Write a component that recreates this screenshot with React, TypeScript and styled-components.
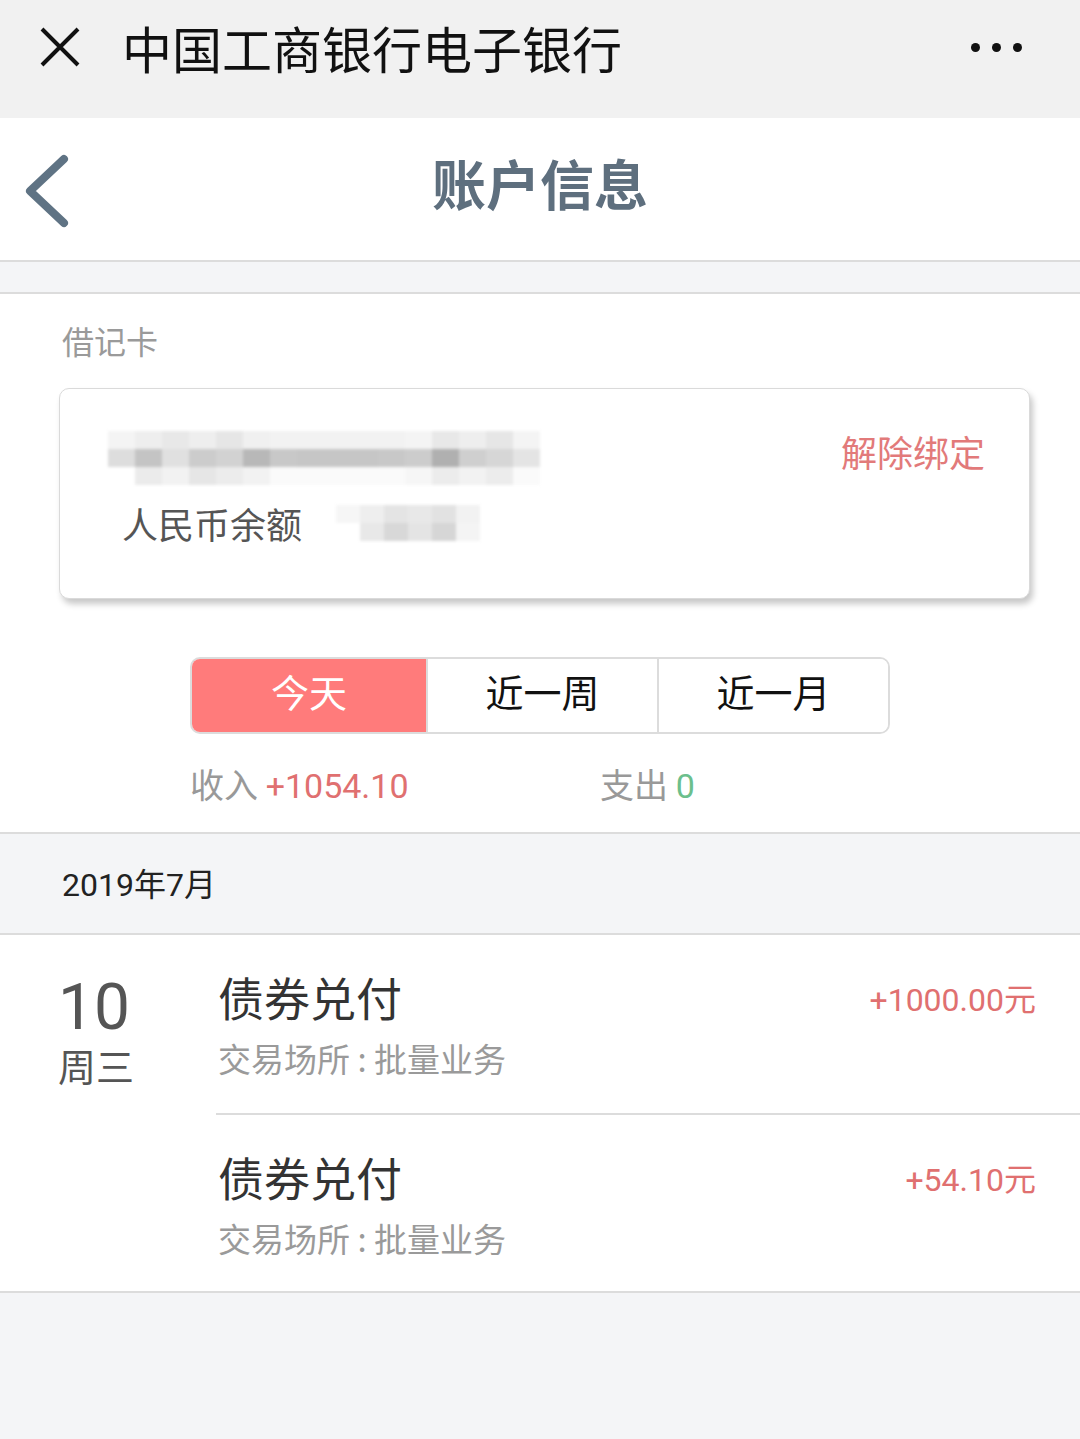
import React from "react";
import styled, { createGlobalStyle } from "styled-components";

const GlobalStyle = createGlobalStyle`
  html, body {
    margin: 0;
    padding: 0;
    background: #f4f5f7;
    font-family: Roboto, "Noto Sans CJK SC", sans-serif;
  }
`;

const accountCells = [
  ["#f4f4f4", "#eeeeee", "#e8e8e8", "#eeeeee", "#e6e6e6", "#f0f0f0", "#f2f2f2", "#f2f2f2", "#f2f2f2", "#f2f2f2", "#f2f2f2", "#f4f4f4", "#e8e8e8", "#eeeeee", "#e6e6e6", "#f4f4f4"],
  ["#dddddd", "#c4c4c4", "#e0e0e0", "#cccccc", "#d2d2d2", "#b8b8b8", "#c8c8c8", "#c6c6c6", "#c6c6c6", "#c6c6c6", "#c8c8c8", "#cccccc", "#b0b0b0", "#cfcfcf", "#d6d6d6", "#e4e4e4"],
  ["#ffffff", "#ebebeb", "#f2f2f2", "#e6e6e6", "#ececec", "#f2f2f2", "#fafafa", "#fafafa", "#fafafa", "#fafafa", "#fafafa", "#f6f6f6", "#ececec", "#f2f2f2", "#ececec", "#fafafa"],
];

const balanceCells = [
  ["#f6f6f6", "#eeeeee", "#e4e4e4", "#e8e8e8", "#e2e2e2", "#f2f2f2"],
  ["#ffffff", "#e8e8e8", "#d8d8d8", "#e4e4e4", "#d6d6d6", "#f4f4f4"],
];

const records = [
  { title: "债券兑付", place: "交易场所 : 批量业务", amount: "+1000.00元" },
  { title: "债券兑付", place: "交易场所 : 批量业务", amount: "+54.10元" },
];

export default function App() {
  return (
    <Page>
      <GlobalStyle />
      <TopBar>
        <CloseIcon viewBox="0 0 44 44">
          <path d="M4 4 L40 40 M40 4 L4 40" stroke="#111" strokeWidth="4" fill="none" />
        </CloseIcon>
        <TopTitle>中国工商银行电子银行</TopTitle>
        <Dots>
          <i />
          <i />
          <i />
        </Dots>
      </TopBar>

      <Header>
        <BackIcon viewBox="0 0 50 74">
          <path d="M42 5 L8 37 L42 69" stroke="#5f7384" strokeWidth="8" strokeLinecap="round" strokeLinejoin="round" fill="none" />
        </BackIcon>
        <HeaderTitle>账户信息</HeaderTitle>
      </Header>

      <Gap />

      <AccountSection>
        <CardLabel>借记卡</CardLabel>
        <Card>
          <CardTop>
            <Mosaic cols={16} cell={27} row={18}>
              {accountCells.flat().map((c, i) => (
                <Cell key={i} $bg={c} />
              ))}
            </Mosaic>
            <Unbind>解除绑定</Unbind>
          </CardTop>
          <BalanceRow>
            <BalanceLabel>人民币余额</BalanceLabel>
            <Mosaic cols={6} cell={24} row={18}>
              {balanceCells.flat().map((c, i) => (
                <Cell key={i} $bg={c} />
              ))}
            </Mosaic>
          </BalanceRow>
        </Card>

        <Segments>
          <Segment $active>今天</Segment>
          <Segment>近一周</Segment>
          <Segment>近一月</Segment>
        </Segments>

        <Summary>
          <SummaryItem>
            收入 <Income>+1054.10</Income>
          </SummaryItem>
          <SummaryItem>
            支出 <Spend>0</Spend>
          </SummaryItem>
        </Summary>
      </AccountSection>

      <MonthBar>2019年7月</MonthBar>

      <ListSection>
        <DateCol>
          <Day>10</Day>
          <Weekday>周三</Weekday>
        </DateCol>
        <Records>
          {records.map((r, i) => (
            <Record key={i} $divider={i > 0}>
              <RecordMain>
                <RecordTitle>{r.title}</RecordTitle>
                <RecordPlace>{r.place}</RecordPlace>
              </RecordMain>
              <Amount>{r.amount}</Amount>
            </Record>
          ))}
        </Records>
      </ListSection>
    </Page>
  );
}

const Page = styled.div`
  width: 1080px;
  min-height: 1439px;
  background: #f4f5f7;
`;

const TopBar = styled.div`
  height: 118px;
  background: #f1f1f1;
  display: flex;
  align-items: center;
  padding: 0 58px 24px 38px;
  box-sizing: border-box;
`;

const CloseIcon = styled.svg`
  width: 44px;
  height: 44px;
  flex: none;
`;

const TopTitle = styled.div`
  margin-left: 40px;
  font-family: "Noto Sans CJK SC", sans-serif;
  font-size: 50px;
  line-height: 60px;
  color: #111;
  flex: 1;
`;

const Dots = styled.div`
  display: flex;
  gap: 12px;
  i {
    width: 9px;
    height: 9px;
    border-radius: 50%;
    background: #111;
  }
`;

const Header = styled.div`
  height: 142px;
  background: #fff;
  position: relative;
  display: flex;
  align-items: center;
  justify-content: center;
  border-bottom: 2px solid #dcdcdc;
`;

const BackIcon = styled.svg`
  position: absolute;
  left: 22px;
  top: 36px;
  width: 50px;
  height: 74px;
`;

const HeaderTitle = styled.div`
  font-family: "Noto Sans CJK SC", sans-serif;
  font-weight: 700;
  font-size: 54px;
  line-height: 64px;
  color: #5e6f7e;
  margin-top: -12px;
`;

const Gap = styled.div`
  height: 30px;
  background: #f4f5f7;
  border-bottom: 2px solid #dcdcdc;
`;

const AccountSection = styled.div`
  background: #fff;
  padding: 23px 0 24px;
  border-bottom: 2px solid #dcdcdc;
`;

const CardLabel = styled.div`
  margin-left: 62px;
  font-family: "Noto Sans CJK SC", sans-serif;
  font-size: 32px;
  line-height: 46px;
  color: #9a9a9a;
`;

const Card = styled.div`
  margin: 25px 0 0 59px;
  width: 971px;
  height: 211px;
  box-sizing: border-box;
  border: 1px solid #dadada;
  border-radius: 10px;
  background: #fff;
  box-shadow: 3px 5px 6px rgba(0, 0, 0, 0.22);
  padding: 42px 44px 0 48px;
`;

const CardTop = styled.div`
  display: flex;
  justify-content: space-between;
  align-items: flex-start;
`;

const Mosaic = styled.div<{ cols: number; cell: number; row: number }>`
  display: grid;
  grid-template-columns: repeat(${(p) => p.cols}, ${(p) => p.cell}px);
  grid-auto-rows: ${(p) => p.row}px;
  filter: blur(1.5px);
`;

const Cell = styled.div<{ $bg: string }>`
  background: ${(p) => p.$bg};
`;

const Unbind = styled.div`
  font-family: "Noto Sans CJK SC", sans-serif;
  font-size: 36px;
  line-height: 44px;
  color: #e27a7a;
  margin-top: -2px;
`;

const BalanceRow = styled.div`
  display: flex;
  align-items: center;
  gap: 34px;
  margin: 16px 0 0 14px;
`;

const BalanceLabel = styled.div`
  font-family: "Noto Sans CJK SC", sans-serif;
  font-size: 36px;
  line-height: 44px;
  color: #555;
`;

const Segments = styled.div`
  margin: 58px 0 0 190px;
  width: 700px;
  height: 77px;
  box-sizing: border-box;
  border: 2px solid #dcdcdc;
  border-radius: 10px;
  overflow: hidden;
  display: grid;
  grid-template-columns: 234px 1fr 1fr;
`;

const Segment = styled.div<{ $active?: boolean }>`
  display: flex;
  align-items: center;
  justify-content: center;
  padding-bottom: 10px;
  font-family: "Noto Sans CJK SC", sans-serif;
  font-size: 38px;
  color: ${(p) => (p.$active ? "#fff" : "#111")};
  background: ${(p) => (p.$active ? "#ff7b7b" : "#fff")};
  & + & {
    border-left: 2px solid #dcdcdc;
  }
`;

const Summary = styled.div`
  display: grid;
  grid-template-columns: 410px 1fr;
  margin: 24px 0 0 190px;
  height: 50px;
  align-items: center;
`;

const SummaryItem = styled.div`
  font-family: "Noto Sans CJK SC", sans-serif;
  font-size: 34px;
  color: #999;
  white-space: pre;
`;

const Income = styled.span`
  font-family: Roboto, sans-serif;
  color: #e07070;
`;

const Spend = styled.span`
  font-family: Roboto, sans-serif;
  color: #6cbf8c;
`;

const MonthBar = styled.div`
  height: 101px;
  box-sizing: border-box;
  padding: 0 0 4px 62px;
  display: flex;
  align-items: center;
  font-size: 32px;
  color: #222;
  background: #f4f5f7;
  border-bottom: 2px solid #dcdcdc;
`;

const ListSection = styled.div`
  background: #fff;
  display: flex;
  border-bottom: 2px solid #dcdcdc;
`;

const DateCol = styled.div`
  width: 216px;
  padding: 43px 0 0 58px;
  box-sizing: border-box;
  flex: none;
`;

const Day = styled.div`
  font-size: 64px;
  line-height: 60px;
  color: #555;
`;

const Weekday = styled.div`
  margin-top: 8px;
  font-family: Roboto, "Noto Sans CJK SC", sans-serif;
  font-size: 38px;
  line-height: 44px;
  color: #555;
`;

const Records = styled.div`
  flex: 1;
`;

const Record = styled.div<{ $divider?: boolean }>`
  display: flex;
  justify-content: space-between;
  align-items: flex-start;
  padding: 33px 44px 0 2px;
  height: 178px;
  box-sizing: border-box;
  border-top: ${(p) => (p.$divider ? "2px solid #dcdcdc" : "none")};
`;

const RecordMain = styled.div`
  display: flex;
  flex-direction: column;
  gap: 11px;
`;

const RecordTitle = styled.div`
  font-family: "Noto Sans CJK SC", sans-serif;
  font-size: 46px;
  line-height: 56px;
  color: #333;
`;

const RecordPlace = styled.div`
  font-family: "Noto Sans CJK SC", sans-serif;
  font-size: 33px;
  line-height: 46px;
  color: #9a9a9a;
  white-space: pre;
`;

const Amount = styled.div`
  font-size: 32px;
  line-height: 56px;
  color: #e07070;
  margin-top: 4px;
`;
